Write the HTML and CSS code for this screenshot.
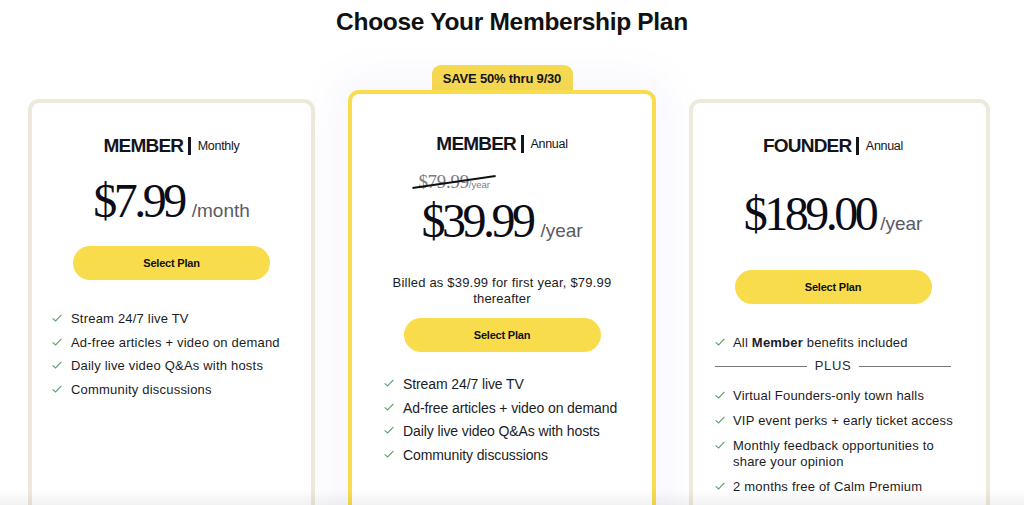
FILE: index.html
```html
<!DOCTYPE html>
<html lang="en">
<head>
    <meta charset="UTF-8">
    <meta name="viewport" content="width=device-width, initial-scale=1.0">
    <title>Choose Your Membership Plan</title>
    <link rel="stylesheet" href="styles.css">
</head>
<body>

    <h1 class="title">Choose Your Membership Plan</h1>

    <div class="plans">

        <!-- Member - Monthly -->
        <div class="plan plan-monthly">
            <div class="plan-name">
                <span class="tier">MEMBER</span><span class="bar"></span><span class="term">Monthly</span>
            </div>
            <div class="price"><span class="amount">$7.99</span><span class="per">/month</span></div>
            <button class="select">Select Plan</button>
            <ul class="perks">
                <li><svg class="check" viewBox="0 0 10 8"><polyline points="0.6,4.3 3.6,7 9.4,0.9"/></svg>Stream 24/7 live TV</li>
                <li><svg class="check" viewBox="0 0 10 8"><polyline points="0.6,4.3 3.6,7 9.4,0.9"/></svg>Ad-free articles + video on demand</li>
                <li><svg class="check" viewBox="0 0 10 8"><polyline points="0.6,4.3 3.6,7 9.4,0.9"/></svg>Daily live video Q&amp;As with hosts</li>
                <li><svg class="check" viewBox="0 0 10 8"><polyline points="0.6,4.3 3.6,7 9.4,0.9"/></svg>Community discussions</li>
            </ul>
        </div>

        <!-- Member - Annual (featured) -->
        <div class="featured">
            <div class="badge">SAVE 50% thru 9/30</div>
            <div class="plan plan-annual">
                <div class="plan-name">
                    <span class="tier">MEMBER</span><span class="bar"></span><span class="term">Annual</span>
                </div>
                <div class="price-wrap">
                    <div class="old-price"><span class="old-amount">$79.99</span><span class="old-per">/year</span></div>
                    <div class="price"><span class="amount">$39.99</span><span class="per">/year</span></div>
                </div>
                <p class="billed">Billed as $39.99 for first year, $79.99 thereafter</p>
                <button class="select">Select Plan</button>
                <ul class="perks">
                    <li><svg class="check" viewBox="0 0 10 8"><polyline points="0.6,4.3 3.6,7 9.4,0.9"/></svg>Stream 24/7 live TV</li>
                    <li><svg class="check" viewBox="0 0 10 8"><polyline points="0.6,4.3 3.6,7 9.4,0.9"/></svg>Ad-free articles + video on demand</li>
                    <li><svg class="check" viewBox="0 0 10 8"><polyline points="0.6,4.3 3.6,7 9.4,0.9"/></svg>Daily live video Q&amp;As with hosts</li>
                    <li><svg class="check" viewBox="0 0 10 8"><polyline points="0.6,4.3 3.6,7 9.4,0.9"/></svg>Community discussions</li>
                </ul>
            </div>
        </div>

        <!-- Founder - Annual -->
        <div class="plan plan-founder">
            <div class="plan-name">
                <span class="tier">FOUNDER</span><span class="bar"></span><span class="term">Annual</span>
            </div>
            <div class="price"><span class="amount">$189.00</span><span class="per">/year</span></div>
            <button class="select">Select Plan</button>
            <ul class="perks">
                <li><svg class="check" viewBox="0 0 10 8"><polyline points="0.6,4.3 3.6,7 9.4,0.9"/></svg><span>All <b>Member</b> benefits included</span></li>
                <li class="divider">PLUS</li>
                <li><svg class="check" viewBox="0 0 10 8"><polyline points="0.6,4.3 3.6,7 9.4,0.9"/></svg>Virtual Founders-only town halls</li>
                <li><svg class="check" viewBox="0 0 10 8"><polyline points="0.6,4.3 3.6,7 9.4,0.9"/></svg>VIP event perks + early ticket access</li>
                <li><svg class="check" viewBox="0 0 10 8"><polyline points="0.6,4.3 3.6,7 9.4,0.9"/></svg>Monthly feedback opportunities to share your opinion</li>
                <li><svg class="check" viewBox="0 0 10 8"><polyline points="0.6,4.3 3.6,7 9.4,0.9"/></svg>2 months free of Calm Premium</li>
            </ul>
        </div>

    </div>

    <div class="page-fade"></div>

</body>
</html>
```

FILE: styles.css
```css
body {
    margin: 0;
    height: 505px;
    overflow: hidden;
    background: #fff;
    color: #14141c;
    font-family: "Liberation Sans", Arial, sans-serif;
}

.title {
    margin: 7px 0 0;
    font-size: 24.5px;
    line-height: 30px;
    font-weight: 700;
    letter-spacing: -0.3px;
    text-align: center;
    color: #111;
}

/* Baris kartu */
.plans {
    display: flex;
    align-items: flex-start;
    gap: 33px;
    padding-left: 28px;
    margin-top: 28px;
}

.plan {
    box-sizing: border-box;
    height: 440px;
    border: 4px solid #efe8dc;
    border-radius: 11px;
    background: #fff;
    display: flex;
    flex-direction: column;
}

.plan-monthly { width: 287px; margin-top: 34px; padding-top: 31px; }
.plan-founder { width: 301px; margin-top: 34px; padding-top: 31px; padding-right: 13px; }

.featured {
    width: 308px;
    display: flex;
    flex-direction: column;
    align-items: center;
}

.badge {
    width: 141px;
    height: 26px;
    line-height: 27px;
    background: #f9dc4c;
    border-radius: 9px 9px 0 0;
    font-size: 13px;
    font-weight: 700;
    letter-spacing: -0.2px;
    text-align: center;
    color: #111;
}

.plan-annual {
    width: 308px;
    margin-top: -1px;
    padding-top: 38px;
    border-color: #f9dc4c;
    box-shadow: 0 0 44px 10px rgba(110, 110, 240, 0.07);
}

/* Judul paket */
.plan-name {
    display: flex;
    align-items: center;
    justify-content: center;
    height: 24px;
}

.tier {
    font-size: 19px;
    font-weight: 700;
    letter-spacing: -0.8px;
}

.bar {
    width: 2.5px;
    height: 18px;
    background: #14141c;
    margin: 0 7px 0 5px;
}

.term {
    font-size: 12.5px;
    letter-spacing: -0.3px;
}

/* Harga */
.price {
    text-align: center;
    font-family: "Liberation Serif", "Times New Roman", serif;
    font-size: 48px;
    line-height: 56px;
    letter-spacing: -3.5px;
    color: #0c0c16;
}

.per {
    font-family: "Liberation Sans", Arial, sans-serif;
    font-size: 19px;
    line-height: 1;
    letter-spacing: 0;
    color: #5a5a64;
    margin-left: 8px;
}

.plan-monthly .price { margin-top: 15px; }
.plan-founder .price { margin-top: 28px; }
.plan-founder .per { margin-left: 5px; }

.price-wrap {
    align-self: center;
    margin-top: 16px;
}

.price-wrap .price {
    text-align: left;
    margin-top: 1px;
}

.old-price {
    position: relative;
    height: 20px;
    line-height: 20px;
    margin-left: -3px;
    color: #7c7c84;
}

.old-amount {
    font-family: "Liberation Serif", "Times New Roman", serif;
    font-size: 19px;
    letter-spacing: -0.3px;
}

.old-per {
    font-size: 9.5px;
}

/* Garis coret miring */
.old-price::after {
    content: "";
    position: absolute;
    left: -6px;
    top: 9px;
    width: 84px;
    height: 1.6px;
    background: #111;
    transform: rotate(-8.2deg);
}

.billed {
    margin: 26px 0 0;
    padding: 0 34px;
    font-size: 13px;
    line-height: 16px;
    letter-spacing: 0.2px;
    text-align: center;
    color: #1c1c24;
}

/* Tombol */
.select {
    display: block;
    align-self: center;
    width: 197px;
    height: 34px;
    margin-top: 17px;
    border: none;
    border-radius: 17px;
    background: #f9dc4c;
    font-family: "Liberation Sans", Arial, sans-serif;
    font-size: 11px;
    font-weight: 700;
    letter-spacing: -0.2px;
    color: #111;
    cursor: pointer;
}

.plan-annual .select { margin-top: 11px; }
.plan-founder .select { margin-top: 28px; }

/* Daftar keuntungan */
.perks {
    list-style: none;
    margin: 31px 0 0;
    padding: 0 0 0 20px;
    display: flex;
    flex-direction: column;
    gap: 7.7px;
    font-size: 13px;
    line-height: 16px;
    letter-spacing: 0.2px;
    color: #1c1c24;
}

.perks li {
    display: flex;
    align-items: flex-start;
    gap: 9px;
}

.check {
    flex: none;
    width: 10px;
    height: 8px;
    margin-top: 3px;
    fill: none;
    stroke: #5e9f6c;
    stroke-width: 1.1;
}

.plan-annual .perks {
    margin-top: 24px;
    padding-left: 32px;
    font-size: 14px;
    letter-spacing: -0.1px;
}

.plan-founder .perks {
    margin-top: 31px;
    padding: 0 12px 0 22px;
    gap: 9px;
}

.plan-founder .perks li { gap: 8px; }

.perks .divider {
    align-items: center;
    gap: 10px;
    margin: -2px 10px 5px 0;
    letter-spacing: 0.6px;
    color: #2a2a32;
}

.perks .divider::before,
.perks .divider::after {
    content: "";
    flex: 1;
    height: 1px;
    background: #77777c;
}

/* Bayangan tipis di bawah layar */
.page-fade {
    position: fixed;
    left: 0;
    right: 0;
    bottom: 0;
    height: 16px;
    background: linear-gradient(to bottom, rgba(0, 0, 0, 0), rgba(0, 0, 0, 0.05));
    pointer-events: none;
}
```
